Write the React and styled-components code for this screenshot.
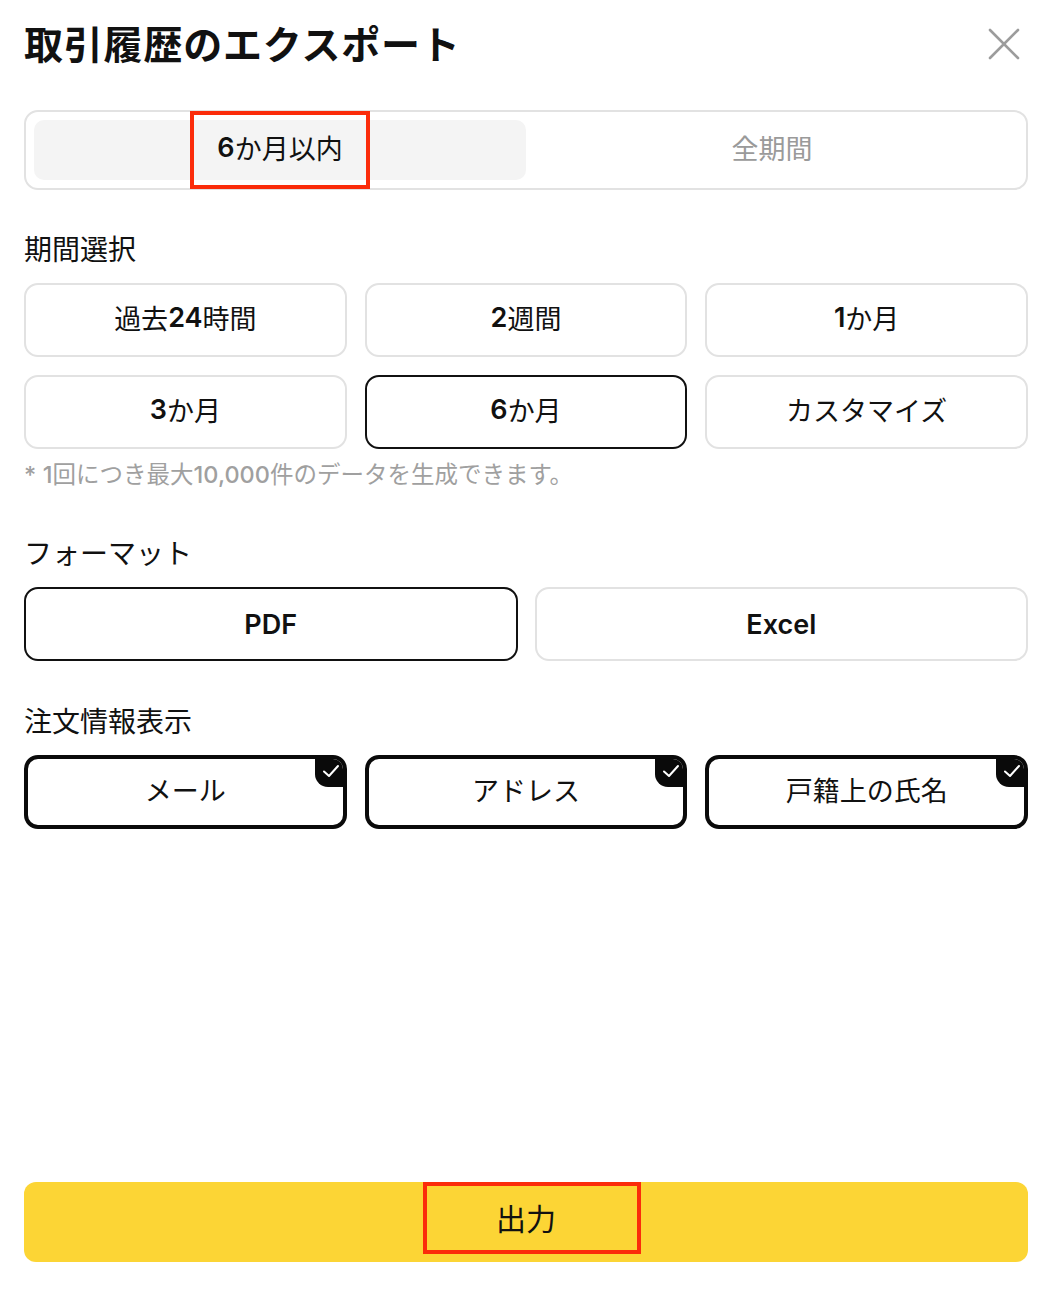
import React from "react";
import styled, { createGlobalStyle } from "styled-components";

const GlobalStyle = createGlobalStyle`
  html, body { margin: 0; padding: 0; background: #fff; }
  body {
    font-family: "Inter", "Noto Sans CJK JP", sans-serif;
    color: #111;
    -webkit-font-smoothing: antialiased;
  }
  * { box-sizing: border-box; }
`;

const Page = styled.div`
  width: 1056px;
  min-height: 1294px;
  padding: 0 28px 32px 24px;
  display: flex;
  flex-direction: column;
`;

const Header = styled.header`
  height: 90px;
  display: flex;
  align-items: center;
  justify-content: space-between;
`;

const Title = styled.h1`
  margin: 0;
  font-size: 39px;
  font-weight: 700;
  line-height: 1.2;
  letter-spacing: 0.8px;
  color: #111;
`;

const CloseButton = styled.button`
  width: 32px;
  height: 32px;
  margin-right: 8px;
  margin-top: -2px;
  padding: 0;
  border: none;
  background: none;
  display: flex;
  align-items: center;
  justify-content: center;
  color: #9c9c9c;
`;

const Segmented = styled.div`
  position: relative;
  margin-top: 20px;
  height: 80px;
  border: 2px solid #e2e2e2;
  border-radius: 14px;
  padding: 8px;
  display: grid;
  grid-template-columns: 1fr 1fr;
`;

const Segment = styled.div`
  position: relative;
  border-radius: 10px;
  background: ${(p) => (p.$active ? "#f4f4f4" : "transparent")};
  color: ${(p) => (p.$active ? "#111" : "#9a9a9a")};
  font-size: 27px;
  font-weight: 400;
  display: flex;
  align-items: center;
  justify-content: center;
  padding-bottom: 5px;
`;

const Highlight = styled.span`
  position: absolute;
  left: 50%;
  top: 50%;
  width: ${(p) => p.$w}px;
  height: ${(p) => p.$h}px;
  transform: translate(-50%, -50%);
  border: 4px solid #fb2c0a;
  pointer-events: none;
`;

const Label = styled.div`
  margin-top: ${(p) => p.$top}px;
  height: 36px;
  line-height: 36px;
  font-size: 28px;
  color: #111;
`;

const OptionGrid = styled.div`
  margin-top: 15px;
  display: grid;
  grid-template-columns: repeat(${(p) => p.$cols}, 1fr);
  gap: 18px ${(p) => p.$gap}px;
`;

const Option = styled.div`
  height: 74px;
  border: 2px solid ${(p) => (p.$selected ? "#111" : "#e2e2e2")};
  border-radius: 14px;
  background: #fff;
  display: flex;
  align-items: center;
  justify-content: center;
  padding-bottom: ${(p) => (p.$latinOnly ? 0 : 5)}px;
  font-size: 27px;
  font-weight: 400;
  color: #111;
`;

const CheckOption = styled.div`
  position: relative;
  height: 74px;
  border: 4px solid #0a0a0a;
  border-radius: 14px;
  background: #fff;
  display: flex;
  align-items: center;
  justify-content: center;
  padding-bottom: 5px;
  font-size: 27px;
  font-weight: 400;
  color: #111;
  overflow: hidden;
`;

const CheckBadge = styled.span`
  position: absolute;
  top: -2px;
  right: -2px;
  width: 30px;
  height: 30px;
  background: #0a0a0a;
  border-bottom-left-radius: 13px;
  display: flex;
  align-items: center;
  justify-content: center;
  padding: 0 0 2px 2px;
`;

const Latin = styled.span`
  font-family: "Inter", sans-serif;
  font-weight: ${(p) => p.$weight || 600};
`;

const Note = styled.p`
  margin: 11px 0 0;
  font-size: 23.5px;
  line-height: 30px;
  color: #a0a0a0;
  font-weight: 400;
`;

const Footer = styled.div`
  margin-top: auto;
`;

const Submit = styled.button`
  position: relative;
  width: 100%;
  height: 80px;
  border: none;
  border-radius: 12px;
  background: #fcd535;
  font-family: inherit;
  font-size: 30px;
  color: #111;
  display: flex;
  align-items: center;
  justify-content: center;
  padding-bottom: 11px;
`;

const SubmitHighlight = styled.span`
  position: absolute;
  left: 399px;
  top: 0;
  width: 218px;
  height: 72px;
  border: 4px solid #fb2c0a;
  pointer-events: none;
`;

const Check = () => (
  <svg width="18" height="14" viewBox="0 0 18 14" fill="none">
    <path d="M2 7.5 L7 12 L16 2" stroke="#fff" strokeWidth="2" strokeLinecap="round" strokeLinejoin="round" />
  </svg>
);

const LATIN = /^[A-Za-z0-9,*]+$/;

// Latin runs are set in a heavier weight than the CJK text around them
const Mixed = ({ text, weight }) =>
  text.split(/([A-Za-z0-9,*]+)/).map((part, i) =>
    LATIN.test(part) ? (
      <Latin key={i} $weight={weight}>
        {part}
      </Latin>
    ) : (
      part
    )
  );

const periods = ["過去24時間", "2週間", "1か月", "3か月", "6か月", "カスタマイズ"];
const formats = ["PDF", "Excel"];
const infos = ["メール", "アドレス", "戸籍上の氏名"];

export default function App() {
  return (
    <>
      <GlobalStyle />
      <Page>
        <Header>
          <Title>取引履歴のエクスポート</Title>
          <CloseButton aria-label="close">
            <svg width="32" height="32" viewBox="0 0 32 32" fill="none">
              <path d="M2 2 L30 30 M30 2 L2 30" stroke="currentColor" strokeWidth="2.6" strokeLinecap="round" />
            </svg>
          </CloseButton>
        </Header>

        <Segmented>
          <Segment $active>
            <Mixed text="6か月以内" />
            <Highlight $w={180} $h={78} />
          </Segment>
          <Segment>全期間</Segment>
        </Segmented>

        <Label $top={42}>期間選択</Label>
        <OptionGrid $cols={3} $gap={18}>
          {periods.map((p) => (
            <Option key={p} $selected={p === "6か月"}>
              <Mixed text={p} />
            </Option>
          ))}
        </OptionGrid>
        <Note>
          <Mixed text="* 1回につき最大10,000件のデータを生成できます。" weight={500} />
        </Note>

        <Label $top={46}>フォーマット</Label>
        <OptionGrid $cols={2} $gap={17}>
          {formats.map((f) => (
            <Option key={f} $selected={f === "PDF"} $latinOnly={LATIN.test(f)}>
              <Mixed text={f} />
            </Option>
          ))}
        </OptionGrid>

        <Label $top={43}>注文情報表示</Label>
        <OptionGrid $cols={3} $gap={18}>
          {infos.map((i) => (
            <CheckOption key={i}>
              {i}
              <CheckBadge>
                <Check />
              </CheckBadge>
            </CheckOption>
          ))}
        </OptionGrid>

        <Footer>
          <Submit>
            出力
            <SubmitHighlight />
          </Submit>
        </Footer>
      </Page>
    </>
  );
}
